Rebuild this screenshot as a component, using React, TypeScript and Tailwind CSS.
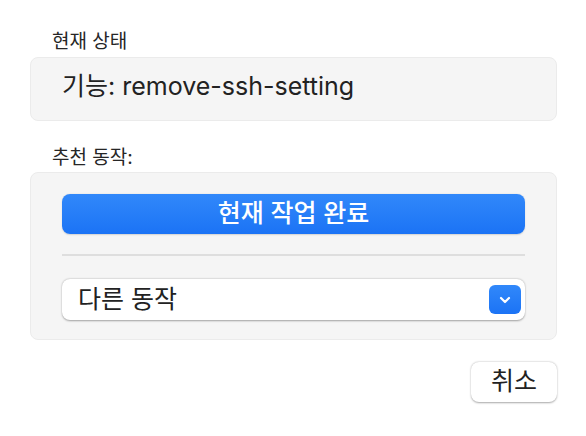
export default function App() {
  const font = { fontFamily: 'Inter, "Noto Sans CJK KR", sans-serif' };
  return (
    <div className="w-[586px] h-[436px] bg-white pl-[30px] pr-[29px] pt-[30px] text-[#262626]" style={font}>
      <div className="pl-[22px] text-[19px] leading-[24px] text-[#262626]">현재 상태</div>
      <div className="mt-[3px] h-[64px] rounded-[8px] bg-[#f5f5f5] border border-[#ebebeb] flex items-center pl-[31px] pb-[5px] text-[25px] text-[#222]">
        기능: remove-ssh-setting
      </div>

      <div className="mt-[25px] pl-[22px] text-[19px] leading-[24px] text-[#262626]">추천 동작:</div>
      <div className="mt-[2px] h-[168px] rounded-[8px] bg-[#f5f5f5] border border-[#ebebeb] px-[31px] pt-[21px]">
        <button className="w-full h-[40px] rounded-[8px] bg-gradient-to-b from-[#3188fa] to-[#1b73f5] text-white text-[25px] font-medium flex items-center justify-center shadow-[0_0.5px_1.5px_rgba(0,0,0,0.15)]">
          현재 작업 완료
        </button>
        <div className="mt-[20px] h-[2px] bg-[#dedede]" />
        <div className="mt-[23px] h-[41px] rounded-[8px] bg-white shadow-[0_0.5px_2px_rgba(0,0,0,0.35)] flex items-center justify-between pl-[16px] pr-[4px]">
          <span className="text-[25px] text-[#222]">다른 동작</span>
          <span className="w-[32px] h-[29px] rounded-[6px] bg-gradient-to-b from-[#3188fa] to-[#1b73f5] flex items-center justify-center">
            <svg width="12" height="8" viewBox="0 0 12 8" fill="none">
              <path d="M2 2l4 4 4-4" stroke="white" strokeWidth="2.2" strokeLinecap="round" strokeLinejoin="round" />
            </svg>
          </span>
        </div>
      </div>

      <div className="mt-[22px] flex justify-end">
        <button className="w-[86px] h-[40px] rounded-[8px] bg-white shadow-[0_0.5px_2px_rgba(0,0,0,0.35)] text-[25px] text-[#222] flex items-center justify-center">
          취소
        </button>
      </div>
    </div>
  );
}
